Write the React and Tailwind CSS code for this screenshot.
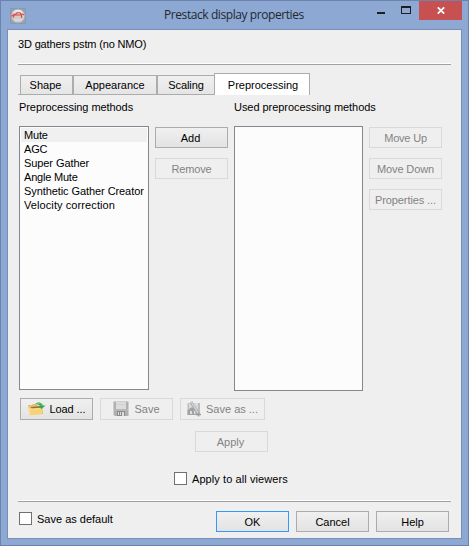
import React from 'react';

function Button({ children, disabled, primary, className = '' }) {
  const look = disabled
    ? 'border-[#d9d9d9] bg-[#efefef] text-[#838383]'
    : primary
      ? 'border-[#3399ff] bg-linear-to-b from-[#f0f0f0] to-[#e3e3e3] text-black'
      : 'border-[#acacac] bg-linear-to-b from-[#f0f0f0] to-[#e3e3e3] text-black';
  return (
    <button
      disabled={disabled}
      className={`flex shrink-0 items-center justify-center border whitespace-nowrap ${look} ${className}`}
    >
      {children}
    </button>
  );
}

function Separator() {
  return <div className="mr-[10px] ml-[10px] h-[2px] border-t border-b border-t-white border-b-[#a0a0a0]" />;
}

function CheckBox({ label, className = '' }) {
  return (
    <label className="flex h-[13px] items-center">
      <span className="size-[13px] shrink-0 border border-[#707070] bg-white" />
      <span className={`ml-[5px] whitespace-nowrap ${className}`}>{label}</span>
    </label>
  );
}

function AppIcon() {
  return (
    <svg width="16" height="16" viewBox="0 0 16 16">
      <rect x=".5" y=".5" width="15" height="15" fill="#8fa2c1" stroke="#8798b3" />
      <circle cx="8" cy="8" r="7" fill="#cfcccc" stroke="#aaa4a6" />
      <path d="M3.5 4.5 Q8 .8 12.5 4.5" fill="none" stroke="#ededed" strokeWidth="1.5" />
      <path d="M1.5 8.3 L4 6.5 L6 6 L7 4.8 H10 L11 6 L14 6.8 M5 7 H12 M4.5 7 L3 9.8 M11.5 7 V10" fill="none" stroke="#e34a4a" strokeWidth="1.1" />
      <path d="M4 12 H12" stroke="#e2e0e0" />
    </svg>
  );
}

function FolderIcon() {
  return (
    <svg width="18" height="14" viewBox="0 0 18 14">
      <path d="M0 3 H4 L5 2 H9 L10 4 H15 V12 L3 13 L2 12 Z" fill="#e3bf69" />
      <path d="M3 5 L13 4 V6.5 H3 Z" fill="#927441" />
      <path d="M0 5.5 L4 6.5 L15 5.5 L14 12 L2 13.5 Z" fill="#fbdc86" />
      <path d="M2 8 L14 6.5 L13.7 12 L2.5 13 Z" fill="#f7d278" />
      <path d="M7 2 C10 -.7 14 .2 15 3.5 H17.5 L13.5 7 L10 4.3 H12 C11 2.3 9 2 7 2 Z" fill="#35a957" />
      <path d="M9 1.5 C12 .5 13.5 2 14 4" fill="none" stroke="#77c86a" />
    </svg>
  );
}

function DiskIcon() {
  return (
    <svg width="16" height="16" viewBox="0 0 16 16">
      <path d="M.5 .5 H15.5 V15 H2 L.5 14 Z" fill="#b0b0b0" />
      <path d="M3 1 H13 V8 H3 Z" fill="#dcdcdc" />
      <path d="M3 3.5 H13" stroke="#d2d2d2" />
      <path d="M1 9 H15" stroke="#bdbdbd" />
      <path d="M4 10 H12 V15 H4 Z" fill="#8c8c8c" />
      <path d="M5 11 H8 V14 H5 Z M9 11 H11 V15 H9 Z" fill="#dddddd" />
      <path d="M6 11 H7 V14 H6 Z" fill="#898989" />
    </svg>
  );
}

function DiskEditIcon() {
  return (
    <svg width="14" height="16" viewBox="0 0 14 16">
      <path d="M.5 2 H13 V14 H.5 Z" fill="#bdbdbd" />
      <path d="M2 2 H11 V8 H2 Z" fill="#dadada" />
      <path d="M.5 9.5 L4 6.5 H9 V14 H.5 Z" fill="#a2a2a2" />
      <path d="M3 10 H5 V13 H3 Z M7 10 H8.5 V13 H7 Z" fill="#dedede" />
      <path d="M4 1 L11.5 13" stroke="#a6a6a6" strokeWidth="3" />
      <path d="M4.3 1 L11 12" stroke="#cfcfcf" strokeWidth="1.6" />
      <path d="M9 13.5 H14 M11.5 12 V15.5" stroke="#9c9c9c" strokeWidth="1.5" />
    </svg>
  );
}

const METHODS = [
  ['Mute', 'tracking-[-0.2px]'],
  ['AGC', 'tracking-[-0.2px]'],
  ['Super Gather', 'tracking-[-0.08px]'],
  ['Angle Mute', 'tracking-[-0.2px]'],
  ['Synthetic Gather Creator', 'tracking-[-0.08px]'],
  ['Velocity correction', 'tracking-[0.09px]'],
];

function TitleBar() {
  return (
    <header className="flex h-[28px] shrink-0 items-start">
      <div className="mt-[7px] ml-[9px] size-[16px]">
        <AppIcon />
      </div>
      <h1 className="mt-[5px] ml-[138px] w-[142px] font-['Open_Sans','Noto_Sans',sans-serif] text-[12px] leading-[18px] tracking-[-0.42px] whitespace-nowrap text-[#23282f]">
        Prestack display properties
      </h1>
      <div className="ml-auto flex">
        <svg width="43" height="19" viewBox="0 0 43 19" shapeRendering="crispEdges">
          <path d="M1 11 H9 V13 H1 Z" fill="#1e1e1e" />
          <path d="M25 5 H35 V13 H25 Z M26 7 V12 H34 V7 Z" fill="#1e1e1e" fillRule="evenodd" />
        </svg>
        <div className="mr-[6px] flex h-[19px] w-[43px] items-center justify-center bg-[#c75050]">
          <svg width="8" height="7" viewBox="0 0 8 7">
            <path d="M.8 .3 L7.2 6.7 M7.2 .3 L.8 6.7" stroke="#fff" strokeWidth="1.7" />
          </svg>
        </div>
      </div>
    </header>
  );
}

function Tabs() {
  const tab = 'flex h-[19px] items-center justify-center border-t border-l border-[#acacac] bg-linear-to-b from-[#f0f0f0] to-[#e5e5e5]';
  return (
    <nav className="ml-[10px] flex h-[22px] items-end">
      <div className="flex h-[20px] w-[196px] border-b border-[#acacac] pl-[2px]">
        <div className={`${tab} w-[53px] border-r pr-[2px]`}>Shape</div>
        <div className={`${tab} w-[84px] border-r`}>Appearance</div>
        <div className={`${tab} w-[57px] tracking-[-0.1px]`}>Scaling</div>
      </div>
      <div className="flex h-[22px] w-[96px] items-center justify-center border-t border-r border-l border-[#acacac] bg-white pl-[2px]">
        Preprocessing
      </div>
    </nav>
  );
}

export default function App() {
  return (
    <div className="flex h-[546px] w-[469px] flex-col overflow-hidden border border-[#6a84ae] bg-[#8ca8d3] font-['Liberation_Sans',Arial,sans-serif] text-[11px] leading-[14px] text-black">
      <TitleBar />
      <main className="ml-[6px] flex h-[510px] w-[455px] flex-col border border-[#7890b6] bg-[#efefef]">
        <p className="mt-[7px] ml-[10px] h-[14px] tracking-[-0.16px]">3D gathers pstm (no NMO)</p>
        <div className="mt-[12px]">
          <Separator />
        </div>
        <div className="mt-[8px]">
          <Tabs />
        </div>
        <section className="mt-[5px] ml-[11px] flex">
          <div className="w-[130px]">
            <h2 className="h-[26px] tracking-[-0.07px] whitespace-nowrap">Preprocessing methods</h2>
            <ul className="h-[264px] border border-[#828790] bg-[#fcfcfc] px-px pt-px">
              {METHODS.map(([name, tracking], i) => (
                <li key={name} className={`h-[14px] pl-[3px] whitespace-nowrap ${tracking} ${i === 0 ? 'bg-[#f0f0f0]' : ''}`}>
                  {name}
                </li>
              ))}
            </ul>
          </div>
          <div className="mt-[27px] ml-[6px] flex flex-col gap-[10px]">
            <Button className="h-[21px] w-[73px] pr-[2px]">Add</Button>
            <Button disabled className="h-[21px] w-[73px] tracking-[-0.2px]">Remove</Button>
          </div>
          <div className="ml-[6px] w-[129px]">
            <h2 className="h-[26px] tracking-[-0.05px] whitespace-nowrap">Used preprocessing methods</h2>
            <div className="h-[265px] border border-[#828790] bg-[#fcfcfc]" />
          </div>
          <div className="mt-[27px] ml-[6px] flex flex-col gap-[10px]">
            <Button disabled className="h-[21px] w-[73px] tracking-[-0.2px]">Move Up</Button>
            <Button disabled className="h-[21px] w-[73px] tracking-[-0.1px]">Move Down</Button>
            <Button disabled className="h-[21px] w-[73px] tracking-[-0.1px]">Properties ...</Button>
          </div>
        </section>
        <div className="mt-[7px] ml-[12px] flex gap-[7px]">
          <Button className="h-[22px] w-[73px] gap-[4px] tracking-[-0.1px]"><FolderIcon />Load ...</Button>
          <Button disabled className="h-[22px] w-[73px] gap-[5px]"><DiskIcon />Save</Button>
          <Button disabled className="h-[22px] w-[85px] gap-[5px]"><DiskEditIcon />Save as ...</Button>
        </div>
        <div className="mt-[11px] ml-[187px]">
          <Button disabled className="h-[21px] w-[73px] pr-[2px]">Apply</Button>
        </div>
        <div className="mt-[20px] ml-[166px]">
          <CheckBox label="Apply to all viewers" className="tracking-[0.08px]" />
        </div>
        <div className="mt-[15px]">
          <Separator />
        </div>
        <footer className="mt-[9px] flex pl-[11px]">
          <div className="mt-px w-[197px]">
            <CheckBox label="Save as default" />
          </div>
          <div className="flex gap-[7px]">
            <Button primary className="h-[21px] w-[73px]">OK</Button>
            <Button className="h-[21px] w-[73px]">Cancel</Button>
            <Button className="h-[21px] w-[73px]">Help</Button>
          </div>
        </footer>
      </main>
    </div>
  );
}
